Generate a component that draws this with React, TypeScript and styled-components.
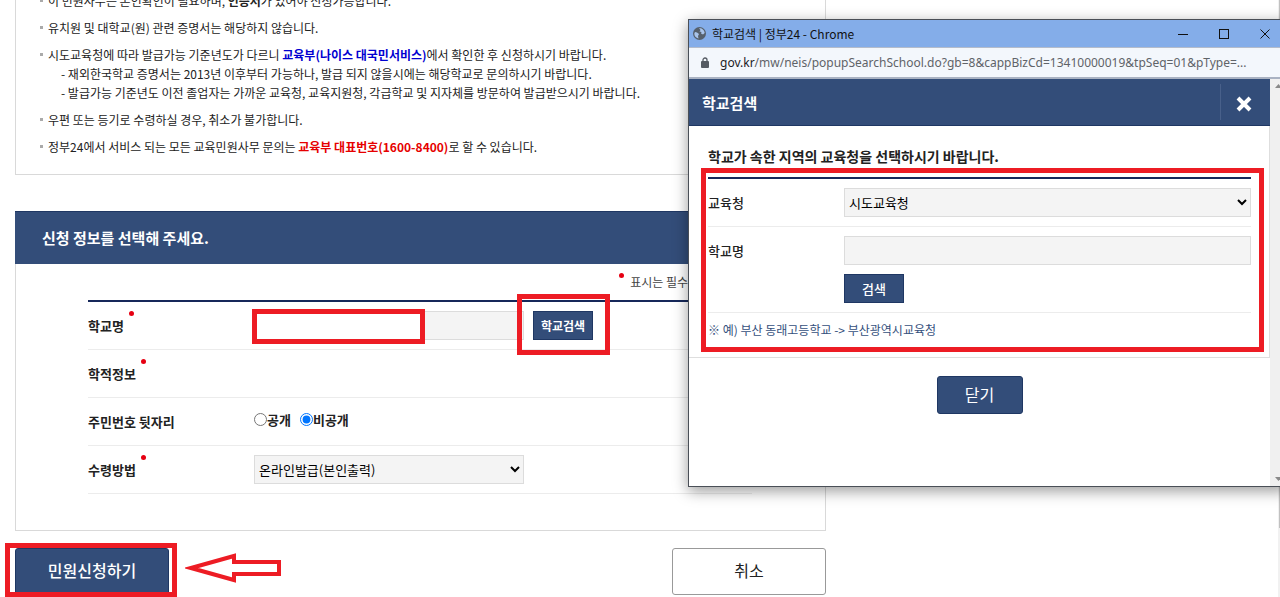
import React from "react";
import styled, { createGlobalStyle, css } from "styled-components";

const navy = "#334d79";
const red = "#ed1c24";

const GlobalStyle = createGlobalStyle`
  *, *::before, *::after { box-sizing: border-box; }
  body {
    margin: 0;
    background: #fff;
    color: #222;
    font-family: "Noto Sans CJK KR", "Noto Sans", sans-serif;
    font-size: 12px;
  }
  button, input, select { font-family: inherit; margin: 0; }
  ul { margin: 0; padding: 0; list-style: none; }
  h1, h2, p { margin: 0; }
`;

const Page = styled.div`
  position: relative;
  display: flex;
  justify-content: space-between;
  min-height: 100vh;
  padding-left: 15px;
  overflow: hidden;
`;

const Main = styled.main`
  flex: 1;
  max-width: 811px;
`;

const PageScroll = styled.div`
  width: 2px;
  background: #f1f1f1;
`;

const PageThumb = styled.div`
  height: 528px;
  margin-left: 1px;
  background: #c1c1c1;
`;

/* Notice */

const Notice = styled.section`
  margin-top: -9px;
  padding: 0 24px 18px;
  border: solid #d9d9d9;
  border-width: 0 1px 1px;
`;

const NoticeList = styled.ul`
  display: flex;
  flex-direction: column;
  gap: 8px;
`;

const NoticeItem = styled.li`
  display: flex;
  gap: 5px;
  line-height: 19px;

  &::before {
    content: "";
    flex: none;
    width: 3px;
    height: 3px;
    margin-top: 8px;
    background: #aaa;
  }
`;

const NoticeSub = styled.p`
  padding-left: 13px;
`;

const NoticeLink = styled.a`
  color: #0000d0;
  font-weight: 700;
  text-decoration: none;
`;

const Phone = styled.strong`
  color: #e60000;
`;

/* Form */

const Panel = styled.section`
  margin-top: 36px;
  border: solid #d9d9d9;
  border-width: 0 1px 1px;
`;

const PanelHead = styled.h2`
  margin: 0 -1px;
  padding: 0 27px;
  border-top: 1px solid #1f3763;
  background: ${navy};
  color: #fff;
  font-size: 15px;
  line-height: 52px;
`;

const PanelBody = styled.div`
  padding: 0 73px 36px 72px;
`;

const RequiredNote = styled.p`
  display: flex;
  justify-content: flex-end;
  gap: 6px;
  color: #444;
  line-height: 36px;
`;

const Dot = styled.span<{ $top?: number }>`
  flex: none;
  width: 5px;
  height: 5px;
  margin-top: ${(p) => p.$top ?? 9}px;
  border-radius: 50%;
  background: #e60012;
`;

const Rows = styled.div`
  border-top: 2px solid #16285a;
`;

const Row = styled.div<{ $label: number }>`
  display: grid;
  grid-template-columns: ${(p) => p.$label}px 1fr;
  min-height: 48px;
  padding: 9px 0;
  border-bottom: 1px solid #ececec;
`;

const labelText = css<{ $light?: boolean }>`
  display: flex;
  gap: 5px;
  height: 29px;
  font-size: 13px;
  font-weight: ${(p) => (p.$light ? 500 : 700)};
  line-height: 29px;
`;

const Label = styled.label<{ $light?: boolean }>`
  ${labelText}
`;

const Caption = styled.span`
  ${labelText}
`;

const Field = styled.div`
  position: relative;
  display: flex;
  flex-wrap: wrap;
  gap: 9px;
`;

const control = css`
  height: 29px;
  border: 1px solid #dcdcdc;
  border-radius: 0;
  background-color: #f4f4f4;
  color: #000;
  font-size: 13px;
`;

const TextInput = styled.input<{ $width?: string }>`
  ${control}
  width: ${(p) => p.$width ?? "100%"};
`;

const Select = styled.select<{ $width?: string }>`
  ${control}
  width: ${(p) => p.$width ?? "100%"};
`;

const SmallButton = styled.button<{ $size: number; $bold?: boolean }>`
  width: 60px;
  height: 29px;
  padding: 0;
  border: 1px solid #1f3763;
  background: ${navy};
  color: #fff;
  font-size: ${(p) => p.$size}px;
  font-weight: ${(p) => (p.$bold ? 700 : 500)};
`;

const Choice = styled.label`
  display: flex;
  align-items: center;
  height: 25px;
  font-size: 13px;
  font-weight: 700;
`;

const Radio = styled.input`
  width: 13px;
  height: 13px;
`;

const Actions = styled.div`
  position: relative;
  display: flex;
  justify-content: space-between;
  margin-top: 17px;
`;

const BigButton = styled.button<{ $primary?: boolean }>`
  width: 154px;
  height: 47px;
  padding-bottom: 4px;
  border: 1px solid ${(p) => (p.$primary ? "#1f3763" : "#999")};
  border-radius: 3px;
  background: ${(p) => (p.$primary ? navy : "#fff")};
  color: ${(p) => (p.$primary ? "#fff" : "#222")};
  font-size: 16px;
  font-weight: ${(p) => (p.$primary ? 500 : 400)};
`;

/* Red frames and arrow drawn over the guide */

const Frame = styled.div<{ $inset: string; $w?: number; $h?: number; $fill?: boolean }>`
  position: absolute;
  inset: ${(p) => p.$inset};
  width: ${(p) => (p.$w ? `${p.$w}px` : "auto")};
  height: ${(p) => (p.$h ? `${p.$h}px` : "auto")};
  border: 5px solid ${red};
  background: ${(p) => (p.$fill ? "#fff" : "transparent")};
  pointer-events: none;
`;

const Arrow = styled.svg`
  position: absolute;
  left: 170px;
  top: 4px;
`;

/* Popup window */

const Popup = styled.aside`
  position: absolute;
  top: 19px;
  right: -8px;
  width: 600px;
  display: flex;
  flex-direction: column;
  border: 1px solid #4a4f57;
  background: #fff;
  box-shadow: 0 4px 14px rgba(0, 0, 0, 0.4);
`;

const TitleBar = styled.div`
  display: flex;
  align-items: center;
  gap: 6px;
  height: 27px;
  padding: 0 17px 0 4px;
  background: #84ade9;
  color: #111;
`;

const TitleText = styled.span`
  flex: 1;
`;

const WindowButton = styled.button`
  display: flex;
  align-items: center;
  justify-content: center;
  width: 11px;
  height: 24px;
  margin-left: 24px;
  padding: 0;
  border: 0;
  background: transparent;
`;

const AddressBar = styled.div`
  display: flex;
  align-items: center;
  gap: 11px;
  height: 32px;
  padding: 0 12px;
  border-top: 1px solid #b4bccb;
  border-bottom: 2px solid #a9b2c2;
  background: #f3f7fc;
`;

const Address = styled.span`
  flex: 1;
  overflow: hidden;
  color: #5f6368;
  font-family: "Noto Sans", sans-serif;
  font-size: 12px;
  text-overflow: ellipsis;
  white-space: nowrap;
`;

const Host = styled.span`
  color: #202124;
`;

const Viewport = styled.div`
  display: flex;
`;

const Document = styled.div`
  flex: 1;
  padding-bottom: 72px;
`;

const DocHead = styled.header`
  display: flex;
  align-items: center;
  justify-content: space-between;
  height: 47px;
  padding-left: 13px;
  border-bottom: 1px solid #1f3763;
  background: ${navy};
  color: #fff;
`;

const DocTitle = styled.h1`
  font-size: 15px;
`;

const CloseIcon = styled.button`
  display: flex;
  align-items: center;
  justify-content: center;
  width: 50px;
  height: 36px;
  padding: 4px 4px 0 0;
  border: 0;
  border-left: 1px solid #48608a;
  background: transparent;
`;

const DocBody = styled.div`
  position: relative;
  padding: 18px 18px 10px 19px;
  border: solid #dedede;
  border-width: 0 1px 1px 0;
`;

const Prompt = styled.p`
  padding-bottom: 9px;
  font-size: 14px;
  font-weight: 700;
  line-height: 24px;
`;

const Example = styled.p`
  color: #34507c;
  line-height: 34px;
`;

const CloseButton = styled.button`
  display: block;
  width: 86px;
  height: 38px;
  margin: 18px auto 0;
  padding-bottom: 4px;
  border: 1px solid #1f3763;
  border-radius: 3px;
  background: ${navy};
  color: #fff;
  font-size: 16px;
`;

const ScrollTrack = styled.div`
  display: flex;
  flex-direction: column;
  align-items: center;
  justify-content: space-between;
  width: 17px;
  padding: 5px 0;
  background: #f0f0f0;
`;

export default function App() {
  return (
    <Page>
      <GlobalStyle />
      <Main>
        <Notice>
          <NoticeList>
            <NoticeItem>
              <div>
                이 민원사무는 본인확인이 필요하며, <strong>인증서</strong>가 있어야 신청가능합니다.
              </div>
            </NoticeItem>
            <NoticeItem>
              <div>유치원 및 대학교(원) 관련 증명서는 해당하지 않습니다.</div>
            </NoticeItem>
            <NoticeItem>
              <div>
                시도교육청에 따라 발급가능 기준년도가 다르니{" "}
                <NoticeLink href="#neis">교육부(나이스 대국민서비스)</NoticeLink>에서 확인한 후 신청하시기
                바랍니다.
                <NoticeSub>- 재외한국학교 증명서는 2013년 이후부터 가능하나, 발급 되지 않을시에는 해당학교로 문의하시기 바랍니다.</NoticeSub>
                <NoticeSub>- 발급가능 기준년도 이전 졸업자는 가까운 교육청, 교육지원청, 각급학교 및 지자체를 방문하여 발급받으시기 바랍니다.</NoticeSub>
              </div>
            </NoticeItem>
            <NoticeItem>
              <div>우편 또는 등기로 수령하실 경우, 취소가 불가합니다.</div>
            </NoticeItem>
            <NoticeItem>
              <div>
                정부24에서 서비스 되는 모든 교육민원사무 문의는 <Phone>교육부 대표번호(1600-8400)</Phone>로 할 수
                있습니다.
              </div>
            </NoticeItem>
          </NoticeList>
        </Notice>

        <Panel>
          <PanelHead>신청 정보를 선택해 주세요.</PanelHead>
          <PanelBody>
            <RequiredNote>
              <Dot />
              표시는 필수 입력 사항임.
            </RequiredNote>
            <Rows>
              <Row $label={166}>
                <Label htmlFor="school">
                  학교명
                  <Dot $top={0} />
                </Label>
                <Field>
                  <TextInput id="school" $width="270px" readOnly />
                  <SmallButton type="button" $size={12} $bold>
                    학교검색
                  </SmallButton>
                  <Frame $inset="-2px auto auto -2px" $w={173} $h={35} $fill />
                  <Frame $inset="-17px auto auto 263px" $w={93} $h={61} />
                </Field>
              </Row>
              <Row $label={166}>
                <Caption>
                  학적정보
                  <Dot $top={0} />
                </Caption>
              </Row>
              <Row $label={166}>
                <Caption>주민번호 뒷자리</Caption>
                <Field>
                  <Choice>
                    <Radio type="radio" name="rrn" />
                    공개
                  </Choice>
                  <Choice>
                    <Radio type="radio" name="rrn" defaultChecked />
                    비공개
                  </Choice>
                </Field>
              </Row>
              <Row $label={166}>
                <Label htmlFor="receive">
                  수령방법
                  <Dot $top={0} />
                </Label>
                <Field>
                  <Select id="receive" $width="270px">
                    <option>온라인발급(본인출력)</option>
                  </Select>
                </Field>
              </Row>
            </Rows>
          </PanelBody>
        </Panel>

        <Actions>
          <BigButton type="button" $primary>
            민원신청하기
          </BigButton>
          <BigButton type="button">취소</BigButton>
          <Frame $inset="-5px auto auto -10px" $w={172} $h={54} />
          <Arrow width="100" height="32" viewBox="0 0 100 32" aria-hidden="true">
            <path
              d="M6 16 L49 4 V10 H94 V22 H49 V28 Z"
              fill="#fff"
              stroke={red}
              strokeWidth="4"
            />
          </Arrow>
        </Actions>
      </Main>

      <PageScroll>
        <PageThumb />
      </PageScroll>

      <Popup>
        <TitleBar>
          <svg width="13" height="13" viewBox="0 0 13 13" aria-hidden="true">
            <circle cx="6.500" cy="6.500" r="6.500" fill="#56606c" />
            <path
              d="M2 5 L4 5.500 L6 7 L5 9 L5.500 11.500 C3 11 1.200 9 1.300 6.500 Z M6 1.300 C9 1 11.500 3.200 11.700 6 L10 7.500 L8 6.500 L8.500 5 L6.500 4.500 L7.500 3 Z"
              fill="#a9c4ea"
            />
          </svg>
          <TitleText>학교검색 | 정부24 - Chrome</TitleText>
          <WindowButton type="button" aria-label="최소화">
            <svg width="10" height="10" viewBox="0 0 10 10">
              <path d="M0 5.500 H10" stroke="#111" />
            </svg>
          </WindowButton>
          <WindowButton type="button" aria-label="최대화">
            <svg width="10" height="10" viewBox="0 0 10 10">
              <rect x="0.500" y="0.500" width="9" height="9" fill="none" stroke="#111" />
            </svg>
          </WindowButton>
          <WindowButton type="button" aria-label="창 닫기">
            <svg width="10" height="10" viewBox="0 0 10 10">
              <path d="M0.500 0.500 L9.500 9.500 M9.500 0.500 L0.500 9.500" stroke="#111" />
            </svg>
          </WindowButton>
        </TitleBar>
        <AddressBar>
          <svg width="8" height="11" viewBox="0 0 8 11" aria-hidden="true">
            <rect y="4" width="8" height="7" rx="1" fill="#555b63" />
            <path d="M2 5 V3 A2 2 0 0 1 6 3 V5" fill="none" stroke="#555b63" strokeWidth="1.300" />
          </svg>
          <Address>
            <Host>gov.kr</Host>/mw/neis/popupSearchSchool.do?gb=8&amp;cappBizCd=13410000019&amp;tpSeq=01&amp;pType=...
          </Address>
        </AddressBar>
        <Viewport>
          <Document>
            <DocHead>
              <DocTitle>학교검색</DocTitle>
              <CloseIcon type="button" aria-label="닫기">
                <svg width="16" height="16" viewBox="0 0 16 16">
                  <path d="M2 2 L14 14 M14 2 L2 14" stroke="#fff" strokeWidth="4" />
                </svg>
              </CloseIcon>
            </DocHead>
            <DocBody>
              <Prompt>학교가 속한 지역의 교육청을 선택하시기 바랍니다.</Prompt>
              <Rows>
                <Row $label={136}>
                  <Label htmlFor="office" $light>
                    교육청
                  </Label>
                  <Field>
                    <Select id="office">
                      <option>시도교육청</option>
                    </Select>
                  </Field>
                </Row>
                <Row $label={136}>
                  <Label htmlFor="name" $light>
                    학교명
                  </Label>
                  <Field>
                    <TextInput id="name" />
                    <SmallButton type="button" $size={13}>
                      검색
                    </SmallButton>
                  </Field>
                </Row>
              </Rows>
              <Example>※ 예) 부산 동래고등학교 -&gt; 부산광역시교육청</Example>
              <Frame $inset="42px 5px 5px 12px" />
            </DocBody>
            <CloseButton type="button">닫기</CloseButton>
          </Document>
          <ScrollTrack>
            <svg width="7" height="4" viewBox="0 0 7 4" aria-hidden="true">
              <path d="M0 4 L3.500 0 L7 4 Z" fill="#8a8a8a" />
            </svg>
            <svg width="7" height="4" viewBox="0 0 7 4" aria-hidden="true">
              <path d="M0 0 L3.500 4 L7 0 Z" fill="#8a8a8a" />
            </svg>
          </ScrollTrack>
        </Viewport>
      </Popup>
    </Page>
  );
}
